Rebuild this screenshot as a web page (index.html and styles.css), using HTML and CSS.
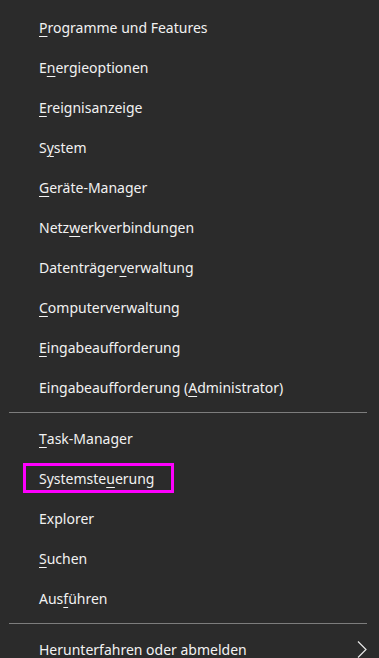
FILE: index.html
```html
<!DOCTYPE html>
<html lang="de">
<head>
    <meta charset="UTF-8">
    <meta name="viewport" content="width=device-width, initial-scale=1.0">
    <title>Schnellzugriffsmenü</title>
    <link rel="stylesheet" href="styles.css">
</head>
<body>
    <nav class="menu">
        <ul class="group">
            <li class="item"><u>P</u>rogramme und Features</li>
            <li class="item">E<u>n</u>ergieoptionen</li>
            <li class="item"><u>E</u>reignisanzeige</li>
            <li class="item">S<u>y</u>stem</li>
            <li class="item"><u>G</u>eräte-Manager</li>
            <li class="item">Netz<u>w</u>erkverbindungen</li>
            <li class="item">Datenträger<u>v</u>erwaltung</li>
            <li class="item"><u>C</u>omputerverwaltung</li>
            <li class="item"><u>E</u>ingabeaufforderung</li>
            <li class="item">Eingabeaufforderung (<u>A</u>dministrator)</li>
        </ul>
        <hr class="divider">
        <ul class="group">
            <li class="item"><u>T</u>ask-Manager</li>
            <li class="item"><span class="marked">Systemste<u>u</u>erung</span></li>
            <li class="item">Explorer</li>
            <li class="item"><u>S</u>uchen</li>
            <li class="item">Aus<u>f</u>ühren</li>
        </ul>
        <hr class="divider">
        <ul class="group">
            <li class="item submenu">
                <span>Her<u>u</u>nterfahren oder abmelden</span>
                <svg class="chevron" width="10" height="17" viewBox="0 0 10 17">
                    <path d="M1 0.5 L9 8.5 L1 16.5" fill="none" stroke="#e8e8e8" stroke-width="1.2"/>
                </svg>
            </li>
        </ul>
    </nav>
</body>
</html>
```

FILE: styles.css
```css
body {
    margin: 0;
    background-color: #2b2b2b;
    color: #f2f2f2;
    font-family: "Noto Sans", "Open Sans", sans-serif;
    font-size: 14px;
}

.menu {
    padding: 7px 12px 0 9px;
}

.group {
    list-style: none;
    margin: 0;
    padding: 0;
}

.item {
    display: flex;
    align-items: center;
    height: 40px;
    padding-left: 30px;
    white-space: nowrap;
}

.item u {
    text-underline-offset: 3px;
    text-decoration-thickness: 1px;
}

.divider {
    border: none;
    border-top: 1px solid #7d7d7d;
    margin: 5px 0;
}

.marked {
    display: flex;
    align-items: center;
    box-sizing: border-box;
    width: 151px;
    height: 30px;
    margin-left: -16px;
    padding-left: 13px;
    border: 3px solid #ff00ff;
}

.submenu {
    justify-content: space-between;
}

.chevron {
    display: block;
}
```
